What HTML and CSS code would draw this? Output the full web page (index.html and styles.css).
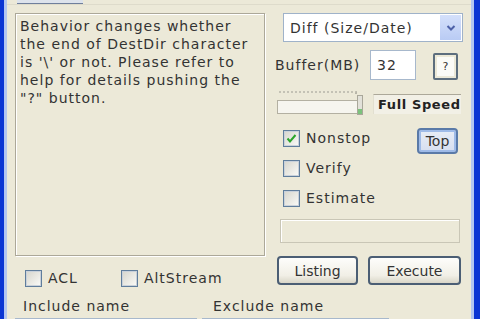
FILE: index.html
```html
<!DOCTYPE html>
<html lang="en">
<head>
    <meta charset="UTF-8">
    <meta name="viewport" content="width=device-width, initial-scale=1.0">
    <title>FastCopy</title>
    <link rel="stylesheet" href="styles.css">
</head>
<body>
    <div class="window">
        <div class="top-strip">
            <div class="tab-edge"></div>
        </div>

        <div class="main">
            <div class="left-col">
                <div class="note">Behavior changes whether<br>the end of DestDir character<br>is '\' or not. Please refer to<br>help for details pushing the<br>"?" button.</div>
                <div class="opt-row">
                    <label class="check"><span class="box"></span>ACL</label>
                    <label class="check"><span class="box"></span>AltStream</label>
                </div>
            </div>

            <div class="right-col">
                <div class="combo">
                    <span class="combo-text">Diff (Size/Date)</span>
                    <span class="drop">
                        <svg width="10" height="8" viewBox="0 0 10 8"><polyline points="1.5,2 5,5.5 8.5,2" fill="none" stroke="#4d61a8" stroke-width="2"/></svg>
                    </span>
                </div>

                <div class="buffer-row">
                    <span class="label">Buffer(MB)</span>
                    <div class="edit">32</div>
                    <button class="help"><span>?</span></button>
                </div>

                <div class="speed-row">
                    <div class="slider">
                        <div class="ticks"></div>
                        <div class="track"><div class="thumb"></div></div>
                    </div>
                    <div class="speed">Full Speed</div>
                </div>

                <div class="check-line">
                    <label class="check">
                        <span class="box checked">
                            <svg width="13" height="13" viewBox="0 0 13 13"><polyline points="2.5,6.5 5,9.5 10.5,3" fill="none" stroke="#2aa52a" stroke-width="2"/></svg>
                        </span>Nonstop
                    </label>
                    <button class="btn top-btn">Top</button>
                </div>
                <div class="check-line">
                    <label class="check"><span class="box"></span>Verify</label>
                </div>
                <div class="check-line">
                    <label class="check"><span class="box"></span>Estimate</label>
                </div>

                <div class="status"></div>

                <div class="actions">
                    <button class="btn listing">Listing</button>
                    <button class="btn execute">Execute</button>
                </div>
            </div>
        </div>

        <div class="names">
            <span class="include">Include name</span>
            <span>Exclude name</span>
        </div>
        <div class="name-edits">
            <div class="name-edit inc"></div>
            <div class="name-edit exc"></div>
        </div>
    </div>
</body>
</html>
```

FILE: styles.css
```css
html, body {
    margin: 0;
    height: 100%;
    overflow: hidden;
}

body {
    font-family: "DejaVu Sans", Verdana, sans-serif;
    font-size: 14px;
    letter-spacing: 1px;
    color: #333;
    background-color: #ece9d8;
}

.window {
    height: 319px;
    box-sizing: border-box;
    overflow: hidden;
    border-left: 4px solid #0b35d3;
    border-right: 6px solid #0b35d3;
    background-color: #ece9d8;
    box-shadow: inset 3px 0 0 #b3c6f1, inset -3px 0 0 #b3c6f1;
    padding: 0 3px;
}

.top-strip {
    height: 5px;
    border-bottom: 1px solid #dedbcb;
    box-sizing: border-box;
}

.tab-edge {
    margin-left: 10px;
    width: 66px;
    height: 4px;
    background-color: #dde3ec;
    border-bottom: 1px solid #6f7f9c;
    box-sizing: border-box;
}

.main {
    display: flex;
    margin-top: 8px;
    padding-left: 8px;
}

.left-col {
    width: 250px;
}

.note {
    height: 243px;
    box-sizing: border-box;
    border: 1px solid #aca899;
    box-shadow: 1px 1px 0 #fff, inset 1px 1px 0 #fff;
    padding: 3px 4px;
    line-height: 18px;
    white-space: nowrap;
}

.opt-row {
    display: flex;
    gap: 43px;
    margin-top: 13px;
    padding-left: 10px;
}

.check {
    display: flex;
    align-items: center;
    gap: 6px;
    height: 18px;
}

.box {
    width: 17px;
    height: 17px;
    box-sizing: border-box;
    border: 1px solid #5f7d9c;
    box-shadow: inset 0 0 0 1px #c9d1da;
    background: linear-gradient(135deg, #d6d5cc, #fbfbf8);
    display: flex;
    align-items: center;
    justify-content: center;
}

.right-col {
    width: 188px;
    margin-left: 10px;
}

.combo {
    margin-left: 8px;
    width: 180px;
    height: 29px;
    box-sizing: border-box;
    border: 1px solid #9fb2c9;
    background-color: #fff;
    display: flex;
    align-items: center;
    padding-left: 6px;
}

.combo-text {
    flex: 1;
}

.drop {
    width: 21px;
    height: 25px;
    margin-right: 1px;
    background: linear-gradient(#d4e0fb, #b9cbf4);
    display: flex;
    align-items: center;
    justify-content: center;
}

.buffer-row {
    display: flex;
    align-items: center;
    margin-top: 8px;
    height: 30px;
}

.buffer-row .label {
    width: 95px;
}

.edit {
    width: 46px;
    height: 30px;
    box-sizing: border-box;
    border: 1px solid #a7b8cc;
    background-color: #fff;
    padding: 4px 6px;
    line-height: 20px;
}

.help {
    margin-left: 17px;
    margin-top: 3px;
    width: 25px;
    height: 27px;
    padding: 2px;
    border: 2px solid #5d6e7e;
    border-radius: 2px;
    background-color: #ece9d8;
    font: inherit;
    font-size: 11px;
    color: #333;
}

.help span {
    display: block;
    height: 100%;
    background-color: #fbfbf7;
    line-height: 19px;
}

.speed-row {
    display: flex;
    margin-top: 8px;
    height: 28px;
}

.slider {
    margin-left: 2px;
    width: 86px;
}

.ticks {
    height: 3px;
    margin: 3px 6px 0 2px;
    border-top: 2px dotted #c4c2b5;
    border-right: 2px solid #b7b5a8;
    box-sizing: border-box;
}

.track {
    margin-top: 6px;
    height: 14px;
    box-sizing: border-box;
    border: 1px solid #b3b0a2;
    border-right: none;
    background-color: #f6f5ef;
    position: relative;
}

.thumb {
    position: absolute;
    right: 0;
    top: -6px;
    width: 6px;
    height: 20px;
    background: linear-gradient(#e2e1d9 70%, #7cc27c 70%);
    border: 1px solid #a9a79a;
    box-sizing: border-box;
}

.speed {
    margin-left: 10px;
    margin-top: 6px;
    width: 88px;
    height: 20px;
    box-sizing: border-box;
    border-top: 1px solid #aca899;
    border-left: 1px solid #e2dfd0;
    background-color: #f2f0e6;
    color: #222;
    font-weight: bold;
    font-size: 13px;
    letter-spacing: 0.6px;
    line-height: 19px;
    padding-left: 4px;
}

.check-line {
    display: flex;
    justify-content: space-between;
    align-items: flex-start;
    padding-left: 8px;
    height: 30px;
}

.speed-row + .check-line {
    margin-top: 12px;
}

.check-line .check {
    margin-top: 1px;
}

.btn {
    font: inherit;
    color: #333;
    height: 29px;
    border: 2px solid #4b5e74;
    border-radius: 4px;
    background: linear-gradient(#fdfdfb, #f1efe6 70%, #d9d6c8);
    padding: 0;
}

.top-btn {
    width: 41px;
    height: 26px;
    margin-right: 5px;
    border-color: #5a7aa8;
    box-shadow: inset 0 0 0 2px #9fbbe8;
    background: linear-gradient(#e8edf6, #d6def0);
}

.status {
    margin-top: 1px;
    margin-left: 5px;
    width: 180px;
    height: 24px;
    box-sizing: border-box;
    border: 1px solid #c9c6b6;
    box-shadow: inset 1px 1px 0 #fff;
}

.actions {
    display: flex;
    gap: 10px;
    margin-top: 13px;
    margin-left: 2px;
}

.listing {
    width: 81px;
}

.execute {
    width: 93px;
}

.names {
    display: flex;
    margin-top: 10px;
    padding-left: 16px;
    line-height: 18px;
}

.include {
    width: 190px;
}

.name-edits {
    display: flex;
    gap: 5px;
    margin-top: 3px;
    padding-left: 8px;
}

.name-edit {
    height: 0;
    border-top: 1px solid #a7b8cc;
}

.inc {
    width: 182px;
}

.exc {
    width: 187px;
}
```
